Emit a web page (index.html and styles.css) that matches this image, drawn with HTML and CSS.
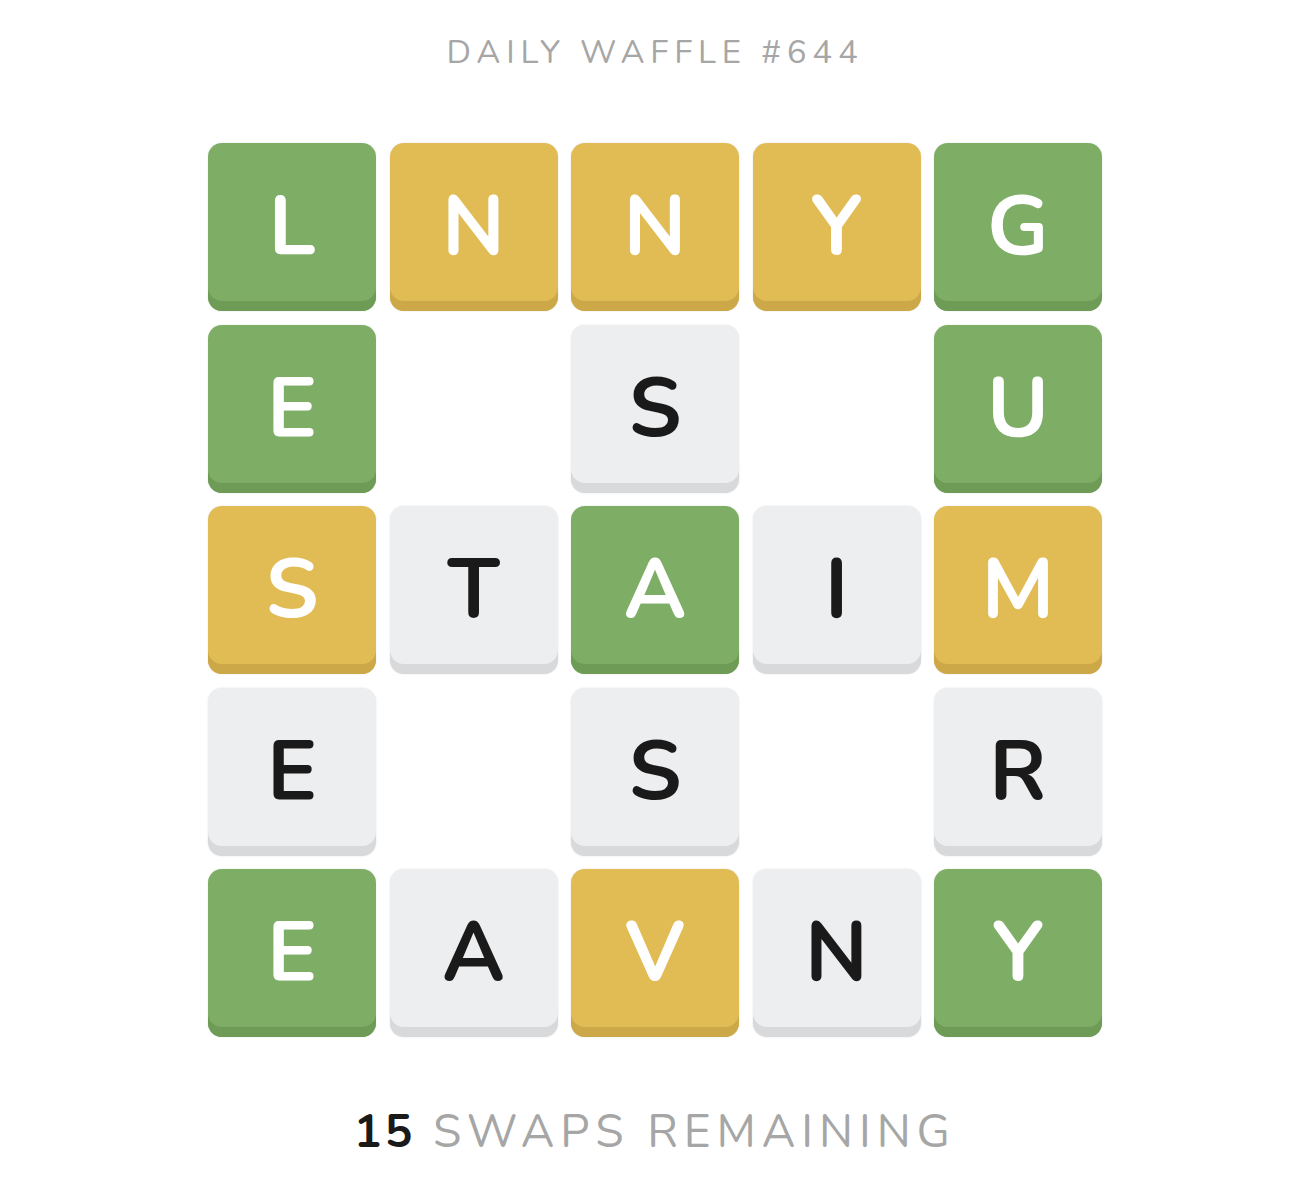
FILE: index.html
```html
<!DOCTYPE html>
<html>
<head>
<meta charset="utf-8">
<link rel="stylesheet" href="styles.css">
</head>
<body>
<div class="page">
  <h1 class="title">DAILY WAFFLE #644</h1>
  <div class="board">
    <div class="tile green">L</div>
    <div class="tile yellow">N</div>
    <div class="tile yellow">N</div>
    <div class="tile yellow">Y</div>
    <div class="tile green">G</div>

    <div class="tile green">E</div>
    <div class="empty"></div>
    <div class="tile gray">S</div>
    <div class="empty"></div>
    <div class="tile green">U</div>

    <div class="tile yellow">S</div>
    <div class="tile gray">T</div>
    <div class="tile green">A</div>
    <div class="tile gray">I</div>
    <div class="tile yellow">M</div>

    <div class="tile gray">E</div>
    <div class="empty"></div>
    <div class="tile gray">S</div>
    <div class="empty"></div>
    <div class="tile gray">R</div>

    <div class="tile green">E</div>
    <div class="tile gray">A</div>
    <div class="tile yellow">V</div>
    <div class="tile gray">N</div>
    <div class="tile green">Y</div>
  </div>
  <div class="swaps"><span class="count">15</span> SWAPS REMAINING</div>
</div>
</body>
</html>
```
FILE: styles.css
```css
html, body {
  margin: 0;
  padding: 0;
  background: #ffffff;
}
.page {
  padding-left: 16px;
  display: flex;
  flex-direction: column;
  align-items: center;
  font-family: "Nunito", "Lato", "Open Sans", sans-serif;
}
.title {
  margin: 35px 0 0 0;
  font-size: 33px;
  font-weight: 400;
  letter-spacing: 5.8px;
  color: #a6a6a6;
  line-height: 36px;
}
.board {
  margin-top: 72px;
  display: grid;
  grid-template-columns: repeat(5, 168px);
  grid-auto-rows: 168px;
  column-gap: 13.5px;
  row-gap: 13.5px;
}
.tile {
  border-radius: 14px;
  box-sizing: border-box;
  display: flex;
  align-items: center;
  justify-content: center;
  font-size: 84px;
  font-weight: 700;
  line-height: 1;
}
.green {
  background: #7ead66;
  color: #ffffff;
  box-shadow: inset 0 -10px 0 #6e9c57, 0 0 2px rgba(0,0,0,0.12);
}
.yellow {
  background: #e1bc55;
  color: #ffffff;
  box-shadow: inset 0 -10px 0 #cca849, 0 0 2px rgba(0,0,0,0.12);
}
.gray {
  background: #edeef0;
  color: #1a1a1a;
  box-shadow: inset 0 -10px 0 #d8d9db, 0 0 2px rgba(0,0,0,0.12);
}
.swaps {
  margin-top: 70px;
  font-size: 46px;
  letter-spacing: 5.9px;
  color: #a6a6a6;
  line-height: 50px;
}
.count {
  color: #1a1a1a;
  font-weight: 700;
  letter-spacing: 3px;
}
```
